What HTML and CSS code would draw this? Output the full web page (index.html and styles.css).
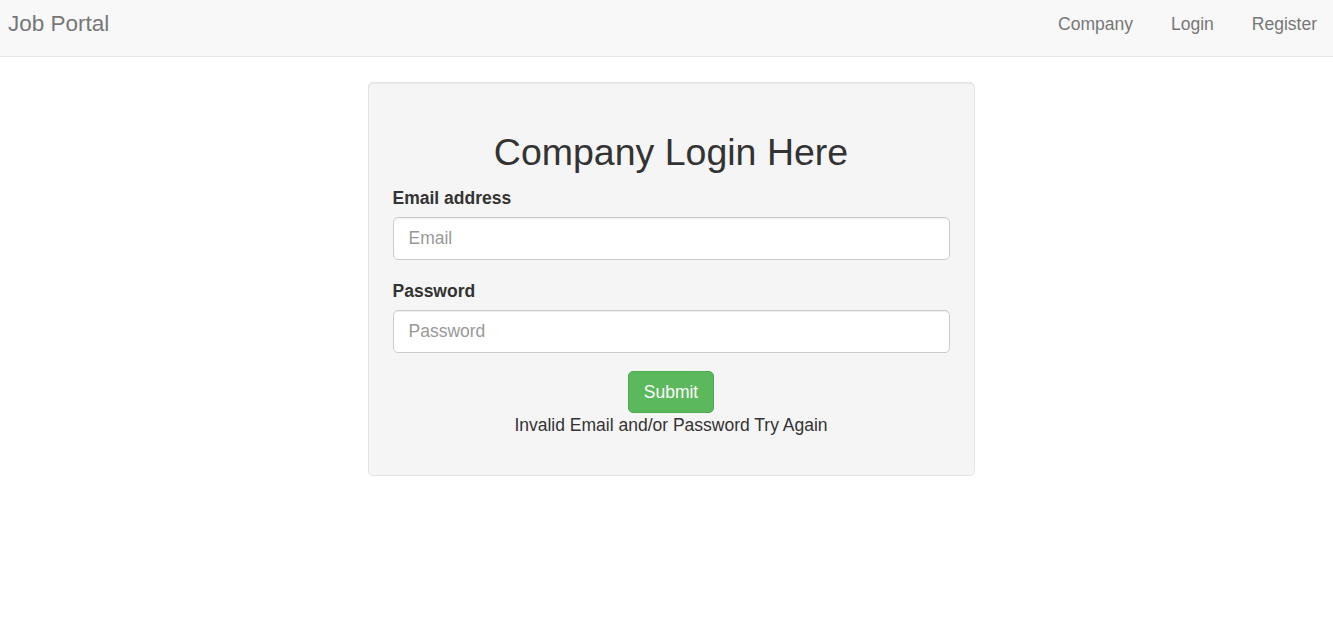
FILE: index.html
```html
<!DOCTYPE html>
<html lang="en">
<head>
<meta charset="utf-8">
<title>Job Portal</title>
<link rel="stylesheet" href="styles.css">
</head>
<body>
<nav class="navbar">
  <a class="brand" href="#">Job Portal</a>
  <ul class="nav-links">
    <li><a href="#">Company</a></li>
    <li><a href="#">Login</a></li>
    <li><a href="#">Register</a></li>
  </ul>
</nav>
<main class="page">
  <div class="well">
    <h2 class="title">Company Login Here</h2>
    <form class="form">
      <div class="form-group">
        <label class="label" for="email">Email address</label>
        <input class="input" id="email" type="email" placeholder="Email">
      </div>
      <div class="form-group">
        <label class="label" for="password">Password</label>
        <input class="input" id="password" type="password" placeholder="Password">
      </div>
      <div class="actions">
        <button class="btn-success" type="button">Submit</button>
        <p class="error">Invalid Email and/or Password Try Again</p>
      </div>
    </form>
  </div>
</main>
</body>
</html>
```
FILE: styles.css
```css
* { box-sizing: border-box; }
html, body { margin: 0; padding: 0; }
body {
  font-family: "Liberation Sans", Arial, Helvetica, sans-serif;
  font-size: 17.5px;
  line-height: 25px;
  color: #333;
  background: #fff;
}
.navbar {
  display: flex;
  justify-content: space-between;
  align-items: flex-start;
  height: 57px;
  background: #f8f8f8;
  border-bottom: 1px solid #e7e7e7;
  margin-bottom: 25px;
}
.brand {
  display: block;
  padding: 11px 0 0 8px;
  font-size: 22.5px;
  line-height: 25px;
  color: #777;
  text-decoration: none;
}
.nav-links {
  display: flex;
  list-style: none;
  margin: 0;
  padding: 0;
}
.nav-links a {
  display: block;
  padding: 12px 19px 0 19px;
  line-height: 25px;
  color: #777;
  text-decoration: none;
}
.nav-links li:last-child a { padding-right: 16px; }
.page {
  display: flex;
  justify-content: center;
  padding-left: 9px;
}
.well {
  width: 607px;
  padding: 24px;
  background: #f5f5f5;
  border: 1px solid #e3e3e3;
  border-radius: 5px;
  box-shadow: inset 0 1px 1px rgba(0,0,0,0.05);
}
.title {
  margin: 25px 0 12.5px;
  font-size: 37.5px;
  line-height: 41.25px;
  font-weight: 500;
  text-align: center;
}
.form { margin: 0; }
.form-group { margin-bottom: 18.5px; }
.label {
  display: inline-block;
  margin-bottom: 6.25px;
  font-weight: bold;
}
.input {
  display: block;
  width: 100%;
  height: 43px;
  padding: 7.5px 15px;
  font-family: inherit;
  font-size: 17.5px;
  line-height: 25px;
  color: #555;
  background: #fff;
  border: 1px solid #ccc;
  border-radius: 5px;
  box-shadow: inset 0 1px 1px rgba(0,0,0,0.075);
}
.input::placeholder { color: #999; }
.actions { text-align: center; }
.btn-success {
  display: inline-block;
  padding: 7.5px 15px;
  font-family: inherit;
  font-size: 17.5px;
  line-height: 25px;
  color: #fff;
  background: #5cb85c;
  border: 1px solid #4cae4c;
  border-radius: 5px;
  cursor: pointer;
}
.error { margin: 0 0 12.5px; }
```
